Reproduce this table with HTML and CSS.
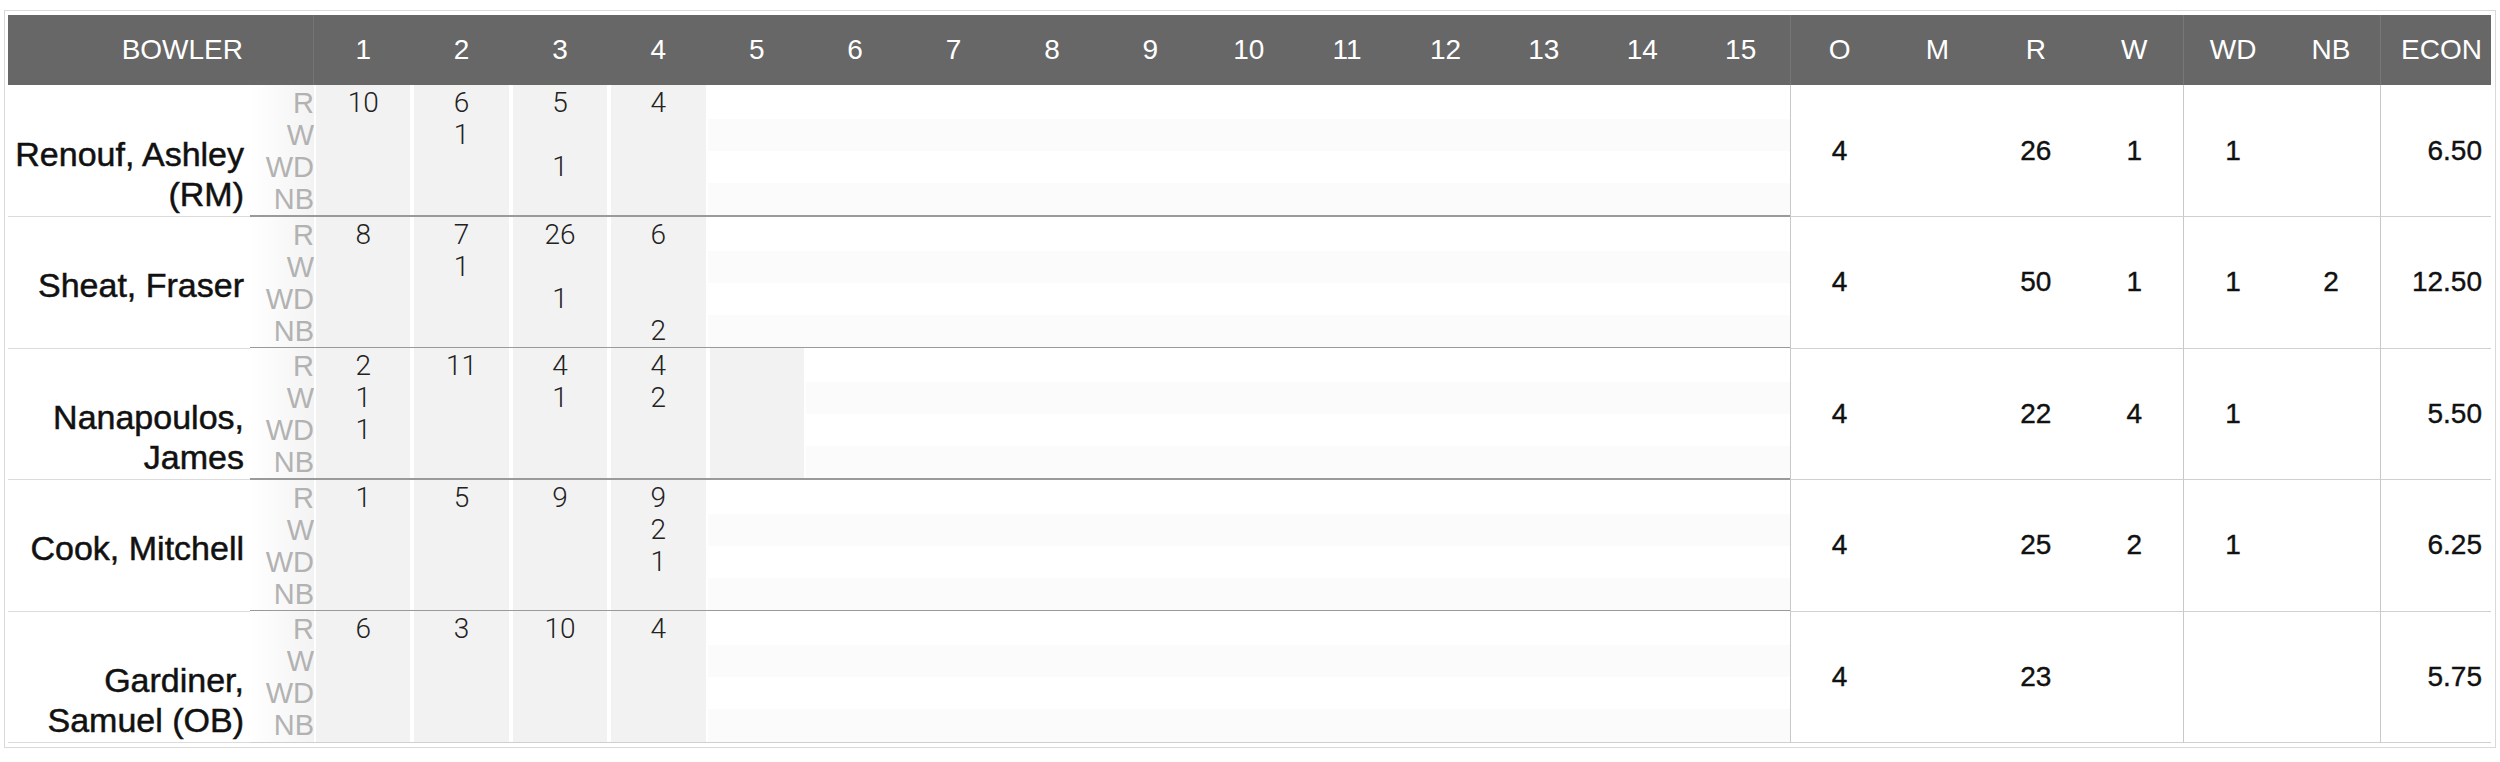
FILE: index.html
```html
<!DOCTYPE html>
<html>
<head>
<meta charset="utf-8">
<title>Bowling figures</title>
<link rel="stylesheet" href="styles.css">
</head>
<body>
<div class="sheet">
  <div class="grid hdr">
    <div class="bowler">BOWLER</div>
    <div>1</div><div>2</div><div>3</div><div>4</div><div>5</div><div>6</div><div>7</div><div>8</div><div>9</div><div>10</div><div>11</div><div>12</div><div>13</div><div>14</div><div>15</div>
    <div class="sep">O</div><div>M</div><div>R</div><div>W</div><div class="sep">WD</div><div>NB</div><div class="sep econ">ECON</div>
  </div>

  <div class="grid row">
    <div class="name"><div class="nm"><span class="nw">Renouf, Ashley</span> <span class="nw">(RM)</span></div></div>
    <div class="lbl"><span>R</span><span>W</span><span>WD</span><span>NB</span></div>
    <div class="ov on"><span>10</span><span></span><span></span><span></span></div>
    <div class="ov on"><span>6</span><span>1</span><span></span><span></span></div>
    <div class="ov on"><span>5</span><span></span><span>1</span><span></span></div>
    <div class="ov on"><span>4</span><span></span><span></span><span></span></div>
    <div class="ov"></div><div class="ov"></div><div class="ov"></div><div class="ov"></div><div class="ov"></div><div class="ov"></div><div class="ov"></div><div class="ov"></div><div class="ov"></div><div class="ov"></div><div class="ov"></div>
    <div class="st sep">4</div><div class="st"></div><div class="st">26</div><div class="st">1</div><div class="st sep">1</div><div class="st"></div><div class="st sep econ">6.50</div>
  </div>

  <div class="grid row">
    <div class="name"><div class="nm"><span class="nw">Sheat, Fraser</span></div></div>
    <div class="lbl"><span>R</span><span>W</span><span>WD</span><span>NB</span></div>
    <div class="ov on"><span>8</span><span></span><span></span><span></span></div>
    <div class="ov on"><span>7</span><span>1</span><span></span><span></span></div>
    <div class="ov on"><span>26</span><span></span><span>1</span><span></span></div>
    <div class="ov on"><span>6</span><span></span><span></span><span>2</span></div>
    <div class="ov"></div><div class="ov"></div><div class="ov"></div><div class="ov"></div><div class="ov"></div><div class="ov"></div><div class="ov"></div><div class="ov"></div><div class="ov"></div><div class="ov"></div><div class="ov"></div>
    <div class="st sep">4</div><div class="st"></div><div class="st">50</div><div class="st">1</div><div class="st sep">1</div><div class="st">2</div><div class="st sep econ">12.50</div>
  </div>

  <div class="grid row">
    <div class="name"><div class="nm"><span class="nw">Nanapoulos,</span> <span class="nw">James</span></div></div>
    <div class="lbl"><span>R</span><span>W</span><span>WD</span><span>NB</span></div>
    <div class="ov on"><span>2</span><span>1</span><span>1</span><span></span></div>
    <div class="ov on"><span>11</span><span></span><span></span><span></span></div>
    <div class="ov on"><span>4</span><span>1</span><span></span><span></span></div>
    <div class="ov on"><span>4</span><span>2</span><span></span><span></span></div>
    <div class="ov on"><span></span><span></span><span></span><span></span></div>
    <div class="ov"></div><div class="ov"></div><div class="ov"></div><div class="ov"></div><div class="ov"></div><div class="ov"></div><div class="ov"></div><div class="ov"></div><div class="ov"></div><div class="ov"></div>
    <div class="st sep">4</div><div class="st"></div><div class="st">22</div><div class="st">4</div><div class="st sep">1</div><div class="st"></div><div class="st sep econ">5.50</div>
  </div>

  <div class="grid row">
    <div class="name"><div class="nm"><span class="nw">Cook, Mitchell</span></div></div>
    <div class="lbl"><span>R</span><span>W</span><span>WD</span><span>NB</span></div>
    <div class="ov on"><span>1</span><span></span><span></span><span></span></div>
    <div class="ov on"><span>5</span><span></span><span></span><span></span></div>
    <div class="ov on"><span>9</span><span></span><span></span><span></span></div>
    <div class="ov on"><span>9</span><span>2</span><span>1</span><span></span></div>
    <div class="ov"></div><div class="ov"></div><div class="ov"></div><div class="ov"></div><div class="ov"></div><div class="ov"></div><div class="ov"></div><div class="ov"></div><div class="ov"></div><div class="ov"></div><div class="ov"></div>
    <div class="st sep">4</div><div class="st"></div><div class="st">25</div><div class="st">2</div><div class="st sep">1</div><div class="st"></div><div class="st sep econ">6.25</div>
  </div>

  <div class="grid row">
    <div class="name"><div class="nm"><span class="nw">Gardiner,</span> <span class="nw">Samuel (OB)</span></div></div>
    <div class="lbl"><span>R</span><span>W</span><span>WD</span><span>NB</span></div>
    <div class="ov on"><span>6</span><span></span><span></span><span></span></div>
    <div class="ov on"><span>3</span><span></span><span></span><span></span></div>
    <div class="ov on"><span>10</span><span></span><span></span><span></span></div>
    <div class="ov on"><span>4</span><span></span><span></span><span></span></div>
    <div class="ov"></div><div class="ov"></div><div class="ov"></div><div class="ov"></div><div class="ov"></div><div class="ov"></div><div class="ov"></div><div class="ov"></div><div class="ov"></div><div class="ov"></div><div class="ov"></div>
    <div class="st sep">4</div><div class="st"></div><div class="st">23</div><div class="st"></div><div class="st sep"></div><div class="st"></div><div class="st sep econ">5.75</div>
  </div>
</div>
</body>
</html>
```

FILE: styles.css
```css
* { box-sizing: border-box; }
body {
  margin: 0;
  background: #fff;
  font-family: "Liberation Sans", Arial, sans-serif;
}
.sheet {
  margin: 10px 4px 0;
  border: 1px solid #d9d9d9;
  padding: 4px 4px 4px 3px;
}
.grid {
  display: grid;
  grid-template-columns: 242px 64px repeat(21, 98.4px) 1fr;
}
.hdr {
  height: 70px;
  background: #676767;
  color: #fff;
  font-size: 28px;
}
.hdr > div {
  display: flex;
  align-items: center;
  justify-content: center;
}
.hdr .bowler {
  grid-column: span 2;
  justify-content: flex-end;
  padding-right: 70px;
  border-right: 1px solid #757575;
}
.hdr .sep { border-left: 1px solid #777; }
.hdr .econ { justify-content: flex-end; padding-right: 9px; }

.row { height: 131.6px; }
.name {
  display: flex;
  align-items: center;
  justify-content: flex-end;
  padding: 6px 6px 0 0;
  font-size: 34px;
  line-height: 40px;
  color: #111;
  text-align: right;
  -webkit-text-stroke: 0.5px #111;
  border-bottom: 1px solid #dcdcdc;
}
.nm { height: 40px; }
.nw { white-space: nowrap; }
.lbl {
  display: flex;
  flex-direction: column;
  align-items: flex-end;
  padding-top: 2px;
  font-size: 29px;
  line-height: 32px;
  color: #b2b2b2;
  background: linear-gradient(to right, #fff, #f3f3f3);
  border-bottom: 2px solid #9a9a9a;
}
.ov {
  display: flex;
  flex-direction: column;
  padding-top: 2px;
  font-family: Roboto, "Liberation Sans", sans-serif;
  font-weight: 300;
  font-size: 28px;
  line-height: 32px;
  text-align: center;
  color: #222;
  background: linear-gradient(to bottom, #fff 0 34px, #fbfbfb 34px 66px, #fff 66px 98px, #fbfbfb 98px);
  border-bottom: 2px solid #9a9a9a;
}
.ov span { height: 32px; }
.ov.on {
  background: #f2f2f2;
  box-shadow: inset 2px 0 #fff, inset -2px 0 #fff;
}
.st {
  display: flex;
  align-items: center;
  justify-content: center;
  font-size: 28px;
  color: #111;
  -webkit-text-stroke: 0.4px #111;
  border-bottom: 1px solid #d0d0d0;
}
.st.sep { border-left: 1px solid #c8c8c8; }
.st.econ { justify-content: flex-end; padding-right: 9px; }
.row:last-child .lbl,
.row:last-child .ov {
  border-bottom: 1px solid #d0d0d0;
}
```
